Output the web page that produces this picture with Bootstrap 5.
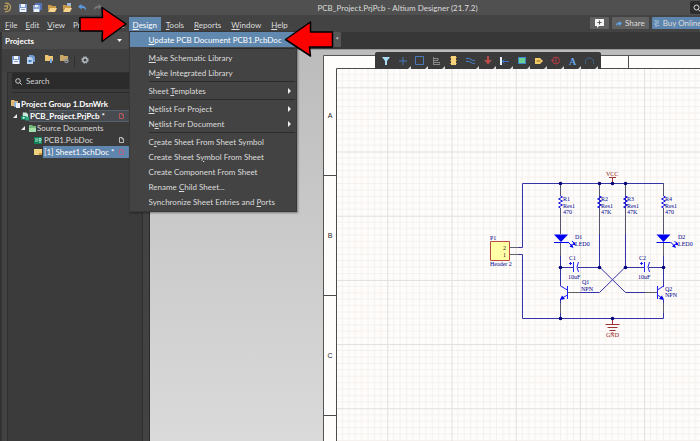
<!DOCTYPE html>
<html lang="en">
<head>
<meta charset="utf-8">
<meta name="viewport" content="width=device-width, initial-scale=1">
<title>PCB_Project.PrjPcb - Altium Designer (21.7.2)</title>
<link rel="stylesheet" href="https://cdn.jsdelivr.net/npm/bootstrap@5.3.0/dist/css/bootstrap.min.css">
<style>
body{font-family:Lato,"Open Sans",sans-serif;font-size:8px;line-height:12px;color:#dcdcdc;background:#3b3b3b}
button,input{font:inherit;color:inherit}
svg{display:block;flex:none}
.titlebar{height:15px;background:#505050}
.tool{width:15px;height:15px;padding:0;border:0;background:none;display:flex;align-items:center;justify-content:center}
.find{width:10px;height:13px;background:#2c2c2c;border-radius:2px 0 0 2px;padding:0 0 0 3px;border:0}
.menubar{height:17px;background:#434343;padding:2px 0 0 1px}
.menubar .entry{display:block;height:15px;line-height:14px;padding:0 4px;border:0;background:none}
.menubar .entry.open{background:#6189b0;color:#fff}
.menubar .drop-host~.entry{padding:0 5px}
u{text-underline-offset:1px}
.side-actions{width:110px;gap:3px}
.act{height:12px;line-height:11px;border:0;border-radius:1px;background:#606060;padding:0 4px;gap:3px;flex:none}
.act.buy{background:#5f86ae;padding:0 2px}
.drop{position:absolute;left:0;top:14px;width:168px;z-index:5;background:#434343;border:1px solid #383838;padding:0 0 2px;box-shadow:1px 1px 2px #0006}
.drop button{display:flex;width:100%;height:15px;line-height:14px;padding:0 5px 0 19px;border:0;background:none;align-items:center;justify-content:space-between;text-align:left}
.drop .picked{background:#6189b0;color:#fff}
.drop hr{height:1px;margin:1px 1px 1px 19px;border:0;background:#2b2b2b;opacity:1}
.panel{width:150px;flex:none;background:#424242;border-left:2px solid #323232;border-right:1px solid #2a2a2a}
.panel-head{height:17px;background:#4c4c4c;padding:0 27px 0 3px;font-weight:700;color:#fff}
.panel-tools{height:23px;padding:3px 0 0 6px;background:#404040}
.panel-body{margin:0 6px 0 5px;border:1px solid #303030;border-bottom:0;background:#3b3b3b;padding:0}
.search{margin-left:4px;height:16px;background:#2b2b2b;border-radius:2px 0 0 2px;padding-left:3px}
.search input{background:none;border:0;width:100px;height:14px;padding:0;outline:0}
.search input::placeholder{color:#d0d0d0;opacity:1}
.rule{height:1px;background:#2b2b2b;margin:3px 0 5px 4px}
.tree{margin:0;padding:0;list-style:none}
.tree li{height:12px;display:flex;align-items:center;padding-left:3px}
.tree .lvl1{padding-left:5px}
.tree .lvl2{padding-left:13px}
.tree .lvl3{padding-left:26px}
.node{flex:1;height:12px;line-height:11px;display:flex;align-items:center;justify-content:space-between;margin-left:1px;padding:0 18px 0 1px;white-space:nowrap;color:inherit;text-decoration:none}
.node.proj{background:#474b4f;border:1px solid #55616c;border-left:0;border-right:0;line-height:9px}
.node.cur{background:#5f86ae;color:#fff}
.tabs{height:17px;background:#373737}
.tab{width:44px;margin-left:147px;height:15px;border:0;background:#565656;text-align:right;padding:0 2px 0 0;line-height:14px}
.work{background:linear-gradient(#bcbcbc,#dadada);border-top:1px solid #989898;overflow:hidden}
.sheet{position:absolute;inset:0;width:100%;height:100%}
.floatbar{position:absolute;left:225px;top:2px;height:17px;background:#3b3b3b;border-radius:2px 2px 0 0;padding:0 3px 0 2px}
.floatbar button{width:17px;height:17px;border:0;padding:0;background:none;display:flex;align-items:center;justify-content:center;position:relative}
.floatbar .more::after{content:"";position:absolute;right:0;bottom:0;border-left:3px solid transparent;border-bottom:3px solid #d8d8d8}
.pointer{position:absolute;z-index:9;pointer-events:none}
.p-left{left:78px;top:5px}
.p-right{left:283px;top:20px}
.sch{font-family:"Liberation Serif",serif;font-size:6px;fill:#00008c}
</style>
<script src="https://cdn.jsdelivr.net/npm/bootstrap@5.3.0/dist/js/bootstrap.bundle.min.js"></script>
</head>
<body class="vh-100 d-flex flex-column overflow-hidden position-relative">

<svg width="0" height="0" class="position-absolute">
<defs>
<symbol id="save" viewBox="0 0 8 8"><path d="M0 0h8v8H0z" fill="#7f9cd0"/><path d="M2 0h4v3H2zM1 4h6v4H1z" fill="#f1f4fa"/><path d="M2 5h4v1H2z" fill="#8a9cc0"/></symbol>
<symbol id="saveall" viewBox="0 0 9 9"><path d="M2 0h7v7H2z" fill="#5674b8"/><path d="M0 2h7v7H0z" fill="#8fa8d8"/><path d="M2 2h3v2H2zM1 6h5v3H1z" fill="#eef2fa"/></symbol>
<symbol id="open" viewBox="0 0 9 8"><path d="M0 1h3l1 1h4v2H2L0 7z" fill="#c99a4a"/><path d="M2 4h7L7 8H0z" fill="#f5d58c"/></symbol>
<symbol id="doc" viewBox="0 0 5 6"><path d="M.5.5h2.500l1.500 1.500v3.500h-4zM3 .5v1.500h1.500" fill="none" stroke="currentColor" stroke-width=".8"/></symbol>
<symbol id="caret" viewBox="0 0 4 4"><path d="M4 0v4H0z" fill="#eee"/></symbol>
</defs>
</svg>

<header class="titlebar d-flex align-items-center">
<button class="tool" aria-label="Altium"><svg width="9" height="11" viewBox="0 0 9 11" fill="none" stroke="#b79d5c" stroke-width="1.300"><path d="M2 1.500c3-1 5.500 1 5.500 4S5 10 2 9.500"/><path d="M1 4.500c2-1.500 4 0 3.500 1.500S2 8 1 6.500M4.500 6V3"/></svg></button>
<button class="tool" aria-label="Save"><svg width="8" height="8"><use href="#save"/></svg></button>
<button class="tool" aria-label="Save all"><svg width="9" height="9"><use href="#saveall"/></svg></button>
<button class="tool" aria-label="Open"><svg width="9" height="8"><use href="#open"/></svg></button>
<button class="tool" aria-label="Open project"><svg width="9" height="9" viewBox="0 0 9 9"><path d="M4 0h4v4H4z" fill="#9db8dc"/><path d="M0 2h3l1 1h4v2H2L0 8z" fill="#c99a4a"/><path d="M2 5h7L7 9H0z" fill="#f5d58c"/></svg></button>
<button class="tool" aria-label="Undo"><svg width="9" height="7" viewBox="0 0 9 7"><path d="M0 2.500 3.500 0v1.700C6.500 1.700 8.500 3.500 8 6.500 7 4.500 6 3.700 3.500 3.700V5.500z" fill="#5d9be0"/></svg></button>
<button class="tool" aria-label="Redo"><svg width="9" height="7" viewBox="0 0 9 7"><path d="M9 2.500 5.500 0v1.700C2.500 1.700.5 3.500 1 6.500 2 4.500 3 3.700 5.500 3.700V5.500z" fill="#777"/></svg></button>
<div class="flex-fill text-center text-nowrap">PCB_Project.PrjPcb - Altium Designer (21.7.2)</div>
<button class="find" aria-label="Find"><svg width="7" height="8" viewBox="0 0 7 8" fill="none" stroke="#ddd"><circle cx="3.500" cy="3.500" r="2.500"/><path d="M5.500 5.500 7 7.500"/></svg></button>
</header>

<nav class="menubar d-flex">
<button class="entry"><u>F</u>ile</button>
<button class="entry"><u>E</u>dit</button>
<button class="entry"><u>V</u>iew</button>
<button class="entry">Proje<u>c</u>t</button>
<button class="entry"><u>P</u>lace</button>
<div class="drop-host position-relative">
<button class="entry open"><u>D</u>esign</button>
<div class="drop text-nowrap">
<button class="picked"><span><u>U</u>pdate PCB Document PCB1.PcbDoc</span></button>
<hr>
<button><span><u>M</u>ake Schematic Library</span></button>
<button><span>M<u>a</u>ke Integrated Library</span></button>
<hr>
<button><span>Sheet <u>T</u>emplates</span><svg width="3" height="6"><path d="M0 0 3 3 0 6z" fill="#eee"/></svg></button>
<hr>
<button><span><u>N</u>etlist For Project</span><svg width="3" height="6"><path d="M0 0 3 3 0 6z" fill="#eee"/></svg></button>
<button><span>N<u>e</u>tlist For Document</span><svg width="3" height="6"><path d="M0 0 3 3 0 6z" fill="#eee"/></svg></button>
<hr>
<button><span>C<u>r</u>eate Sheet From Sheet Symbol</span></button>
<button><span>Create Sheet S<u>y</u>mbol From Sheet</span></button>
<button><span>Create Component From Sheet</span></button>
<button><span>Rename <u>C</u>hild Sheet...</span></button>
<button><span>Synchronize Sheet Entries and <u>P</u>orts</span></button>
</div>
</div>
<button class="entry"><u>T</u>ools</button>
<button class="entry"><u>R</u>eports</button>
<button class="entry"><u>W</u>indow</button>
<button class="entry"><u>H</u>elp</button>
<div class="side-actions d-flex ms-auto text-nowrap">
<button class="act" aria-label="Comment"><svg width="11" height="9" viewBox="0 0 11 9"><path d="M1 0h9v7H5L3 9V7H1z" fill="#f4f4f4"/><path d="M5.500 1.500v4M3.500 3.500h4" stroke="#555"/></svg></button>
<button class="act d-flex align-items-center"><svg width="6" height="5" viewBox="0 0 6 5"><path d="M0 5c0-2.500 1-3.500 3-3.500V0l3 2.500L3 5V3.500C1.500 3.500.8 4 0 5z" fill="#5fa2e6"/></svg>Share</button>
<button class="act buy d-flex align-items-center"><svg width="6" height="7" viewBox="0 0 6 7"><path d="M0 0h2v3h3M0 4h2v3M3 1h2M3 5.500h2" fill="none" stroke="#a9c2dc"/></svg>Buy Online</button>
</div>
</nav>

<main class="d-flex flex-fill overflow-hidden">
<aside class="panel d-flex flex-column">
<div class="panel-head d-flex align-items-center">Projects<svg class="ms-auto" width="5" height="3"><path d="M0 0h5L2.500 3z" fill="#eee"/></svg></div>
<div class="panel-tools d-flex">
<button class="tool" aria-label="Save"><svg width="8" height="8"><use href="#save"/></svg></button>
<button class="tool" aria-label="Compile"><svg width="8" height="9" viewBox="0 0 8 9"><path d="M2 0h4l2 2v5H2z" fill="#6f9bd0"/><path d="M0 2h4l2 2v5H0z" fill="#b9d3ef"/><path d="M1.500 5h3v2h-3z" fill="#4b7fc0"/></svg></button>
<button class="tool ms-1" aria-label="Explore"><svg width="9" height="9" viewBox="0 0 9 9"><path d="M0 0h3l1 1h4v5H0z" fill="#ecc474"/><path d="M5 5h2M6 4v4" stroke="#74a5e0" stroke-width="2"/></svg></button>
<button class="tool" aria-label="Project options"><svg width="9" height="9" viewBox="0 0 9 9"><path d="M0 0h3l1 1h4v5H0z" fill="#c9a768"/><circle cx="6.500" cy="6" r="1.600" fill="none" stroke="#8a949e" stroke-width="1.300"/></svg></button>
<svg class="align-self-center" width="5" height="10"><path d="M2.500 0v10" stroke="#2f2f2f"/></svg>
<button class="tool" aria-label="Settings"><svg width="8" height="8" viewBox="0 0 8 8"><circle cx="4" cy="4" r="2.200" fill="none" stroke="#b9c2c8" stroke-width="1.400"/><circle cx="4" cy="4" r="3.300" fill="none" stroke="#b9c2c8" stroke-width="1" stroke-dasharray="1.300"/></svg></button>
</div>
<div class="panel-body flex-fill">
<label class="search d-flex align-items-center gap-1"><svg width="7" height="7" viewBox="0 0 7 7" fill="none" stroke="#ddd" stroke-width=".9"><circle cx="3" cy="3" r="2.300"/><path d="M4.700 4.700 6.700 6.700"/></svg><input type="text" placeholder="Search" aria-label="Search"></label>
<div class="rule"></div>
<ul class="tree">
<li><svg width="9" height="8" viewBox="0 0 9 8"><path d="M0 0h3l1 1h3v5H0z" fill="#e0b970"/><path d="M3 2h3v5H3z" fill="#8fb2dc"/><path d="M5 3h4v5H5z" fill="#e9eef5"/></svg><a href="#" class="node fw-bold text-white ms-0">Project Group 1.DsnWrk</a></li>
<li class="lvl1"><svg width="4" height="4"><use href="#caret"/></svg><svg class="ms-1" width="8" height="9" viewBox="0 0 9 9"><path d="M2 0h4l2 2v5H2z" fill="#c7e9da"/><path d="M0 4h6v4H0z" fill="#16946a"/><path d="M5 5h4v4H5z" fill="#2aa87c"/><path d="M2 5h2v2H2z" fill="#e2fff4"/></svg><a href="#" class="node proj fw-bold text-white ms-0">PCB_Project.PrjPcb *<svg width="5" height="6" color="#cf5a5e"><use href="#doc"/></svg></a></li>
<li class="lvl2"><svg width="4" height="4"><use href="#caret"/></svg><svg class="ms-1" width="7" height="7" viewBox="0 0 7 7"><path d="M0 0h3l1 1h3v6H0z" fill="#73b77c"/><path d="M0 3h7v4H0z" fill="#a2dca6"/></svg><a href="#" class="node ms-0">Source Documents</a></li>
<li class="lvl3"><svg width="8" height="7" viewBox="0 0 8 7"><path d="M0 0h8v7H0z" fill="#12805a"/><path d="M1 2h3M1 4h3M5 1.500h2v2H5zM5 5h2" stroke="#a8e6cb" fill="none"/></svg><a href="#" class="node">PCB1.PcbDoc<svg width="5" height="6"><use href="#doc"/></svg></a></li>
<li class="lvl3"><svg width="8" height="6" viewBox="0 0 8 6"><path d="M0 0h8v6H0z" fill="#f0d27e"/><path d="M5 4h3v2H5z" fill="#c89636"/></svg><a href="#" class="node cur">[1] Sheet1.SchDoc *<svg width="5" height="6" color="#c75a74"><use href="#doc"/></svg></a></li>
</ul>
</div>
</aside>

<section class="flex-fill d-flex flex-column overflow-hidden">
<div class="tabs"><button class="tab" aria-label="Sheet1.SchDoc">*</button></div>
<div class="work flex-fill position-relative">
<svg class="sheet" role="img" aria-label="Astable multivibrator schematic">
<defs>
<pattern id="grid" width="64.200" height="64.200" patternUnits="userSpaceOnUse" x="387.300" y="87.300">
<path d="M6.400 0v64.200M12.800 0v64.200M19.300 0v64.200M25.700 0v64.200M32.100 0v64.200M38.500 0v64.200M44.900 0v64.200M51.400 0v64.200M57.800 0v64.200M0 6.400h64.200M0 12.800h64.200M0 19.300h64.200M0 25.700h64.200M0 32.100h64.200M0 38.500h64.200M0 44.900h64.200M0 51.400h64.200M0 57.800h64.200" stroke="#f3f0ee" fill="none"/>
<path d="M.5 0v64.200M0 .5h64.200" stroke="#e0dfde"/>
</pattern>
<g id="res"><path d="M0 183V196M0 208V234" stroke="#55556e"/><path d="M0 196l2 1-4 2 4 2-4 2 4 2-4 2 2 1" stroke="#2020e0"/></g>
<g id="led"><path d="M-7 234.500H7L0 242z" fill="#0000f0" stroke="none"/><path d="M-7 242.500H7" stroke="#0000f0"/><path d="M7 242l4 4M11 241l3 3" stroke="#0000f0"/><path d="M12.500 248l-4-1.500 2.500-2.500zM15 245.500l-4-1 2.500-2.500z" fill="#0000f0" stroke="none"/></g>
</defs>
<g transform="translate(-150 -50)">
<path d="M323.500 460V55.500H720V460z" fill="#fffdfb" stroke="#555"/>
<path d="M337 69H720V460H337z" fill="url(#grid)"/>
<path d="M336.500 460V68.500H720M323.500 175.500h13M323.500 295.500h13M323.500 415.500h13M628.500 55v13" fill="none" stroke="#4c4c4c"/>
<g font-family="Liberation Sans,sans-serif" font-size="7" fill="#222" text-anchor="middle"><text x="330" y="118">A</text><text x="330" y="238">B</text><text x="330" y="358">C</text></g>
<g fill="none" stroke="#3434a8">
<path d="M509.500 247.500H522.500V183.500H663.500M509.500 254.500H522.500V318.500H663.500V300M560.500 242V286M560.500 299V318M663.500 242V287M599.500 183V267L625.500 292.500H657M625.500 183V267L599.500 292.500H568"/>
<path d="M560.500 267.500H574M578 267.500H599.500M625.500 267.500H645M649 267.500H663.500"/>
<path d="M509.500 247.500h9M509.500 254.500h9M560.500 242v14M663.500 242v14M560.500 303v10M663.500 303v10M568 292.500h12M645 292.500h12" stroke="#62626a"/>
<use href="#res" x="560.500"/><use href="#res" x="599.500"/><use href="#res" x="625.500"/><use href="#res" x="663.500"/>
<use href="#led" x="561"/><use href="#led" x="663.500"/>
<g stroke="#2020f0"><path d="M573.500 262v10M578.500 262q-3 5 0 10M569 263.500h3M570.500 262v3M644.500 262v10M649.500 262q-3 5 0 10M640 263.500h3M641.500 262v3"/>
<path d="M567.500 286v13M567.500 290l-7-4M567.500 295l-7 4M657.500 286v13M657.500 290l6-4M657.500 295l6 4"/></g>
<path d="M560 300l2-4.500 3 3.500zM664 300l-2-4.500-3 3.500z" fill="#0000f0" stroke="none"/>
<path d="M612.500 183v-5.500M609 177.500h7M612.500 318v6M605.500 324.500h14M607.500 327.500h10M609.500 330.500h6M611.500 333h2" stroke="#a03434"/>
</g>
<g fill="#00007c"><circle cx="560.500" cy="183.500" r="1.800"/><circle cx="599.500" cy="183.500" r="1.800"/><circle cx="612.500" cy="183.500" r="1.800"/><circle cx="625.500" cy="183.500" r="1.800"/><circle cx="560.500" cy="267.500" r="1.800"/><circle cx="599.500" cy="267.500" r="1.800"/><circle cx="625.500" cy="267.500" r="1.800"/><circle cx="663.500" cy="267.500" r="1.800"/><circle cx="560.500" cy="318.500" r="1.800"/><circle cx="612.500" cy="318.500" r="1.800"/></g>
<path d="M490.500 241.500h19v19h-19z" fill="#ffffa6" stroke="#b84a42"/>
<g class="sch">
<text x="490" y="240">P1</text><text x="490" y="266">Header 2</text><text x="503" y="250" fill="#222">2</text><text x="503" y="257" fill="#222">1</text>
<text x="563" y="201">R1</text><text x="563" y="208">Res1</text><text x="563" y="214">470</text>
<text x="601" y="201">R2</text><text x="601" y="208">Res1</text><text x="601" y="214">47K</text>
<text x="627" y="201">R3</text><text x="627" y="208">Res1</text><text x="627" y="214">47K</text>
<text x="665" y="201">R4</text><text x="665" y="208">Res1</text><text x="665" y="214">470</text>
<text x="575" y="239">D1</text><text x="575" y="246">LED0</text>
<text x="678" y="239">D2</text><text x="678" y="246">LED0</text>
<text x="569" y="260">C1</text><text x="568" y="279">10uF</text>
<text x="639" y="260">C2</text><text x="638" y="279">10uF</text>
<text x="582" y="284">Q1</text><text x="581" y="291">NPN</text>
<text x="665" y="291">Q2</text><text x="665" y="297">NPN</text>
<text x="606" y="176" fill="#8c1414">VCC</text><text x="606" y="337" fill="#8c1414">GND</text>
</g>
</g>
</svg>
<div class="floatbar d-flex">
<button aria-label="Filter"><svg width="8" height="8"><path d="M0 0h8L5 4v4H3V4z" fill="#a9dcf5"/></svg></button>
<button class="more" aria-label="Move"><svg width="8" height="8"><path d="M4 0v8M0 4h8" stroke="#4b79b8"/></svg></button>
<button class="more" aria-label="Select"><svg width="9" height="9"><path d="M.5.5h8v8h-8z" fill="none" stroke="#4a78b8"/></svg></button>
<button class="more" aria-label="Align"><svg width="7" height="8"><path d="M.5 0v8M1 1.500h4v2H1M1 5.500h6v2H1" fill="none" stroke="#8a8a8a"/></svg></button>
<button aria-label="Part"><svg width="7" height="9"><path d="M1 0h5v9H1z" fill="#f6d27a"/><path d="M0 1.500h1M0 4.500h1M0 7.500h1M6 1.500h1M6 4.500h1M6 7.500h1" stroke="#b08a3a"/></svg></button>
<button class="more" aria-label="Wire"><svg width="9" height="8" fill="none" stroke="#4580c8"><path d="M0 1.500h2q2 0 3 1t4 1M0 4.500h2q2 0 3 1t4 1"/></svg></button>
<button class="more" aria-label="Power port"><svg width="8" height="9"><path d="M4 0v4" stroke="#b54c4a" stroke-width="2"/><path d="M0 4h8L4 8.500z" fill="#b54c4a"/></svg></button>
<button class="more" aria-label="Harness"><svg width="9" height="8"><path d="M1 0v8" stroke="#e6f0ff" stroke-width="2"/><path d="M2 4.500h7M4.500 2.500l-2 2 2 2" stroke="#3a72c4" fill="none"/></svg></button>
<button class="more" aria-label="Sheet symbol"><svg width="8" height="7"><path d="M0 0h8v7H0z" fill="#3f88c8"/><path d="M1 1h6v5H1z" fill="#69cf93"/></svg></button>
<button class="more" aria-label="Port"><svg width="8" height="6"><path d="M0 0h5l3 3-3 3H0z" fill="#f3cb68"/><path d="M1.500 3h4" stroke="#8c6a20"/></svg></button>
<button class="more" aria-label="No ERC"><svg width="9" height="9" fill="none" stroke="#b83c40"><circle cx="5" cy="4.500" r="3.500"/><path d="M5 2v5M0 4.500h3"/></svg></button>
<button class="more" aria-label="Text"><svg width="9" height="10"><text x="1" y="9" font-family="Liberation Serif,serif" font-size="10" font-weight="700" fill="#64a4ee">A</text></svg></button>
<button class="more" aria-label="Arc"><svg width="9" height="8"><path d="M.5 7C-.5 3 2 1 4.500 1S9.500 3 8.500 7" fill="none" stroke="#40699c"/></svg></button>
</div>
</div>
</section>
</main>

<svg class="pointer p-left" width="52" height="40"><path d="M2 12.500H24.500L24 2.500 48 19 24 36.500 24.500 26H2z" fill="#f00" stroke="#000" stroke-width="1.500" stroke-linejoin="round"/></svg>
<svg class="pointer p-right" width="52" height="38"><path d="M49.500 12H27.500L27.500 2 2.500 19.500 27.500 36 26.500 27H49.500z" fill="#f00" stroke="#000" stroke-width="1.500" stroke-linejoin="round"/></svg>
</body>
</html>
